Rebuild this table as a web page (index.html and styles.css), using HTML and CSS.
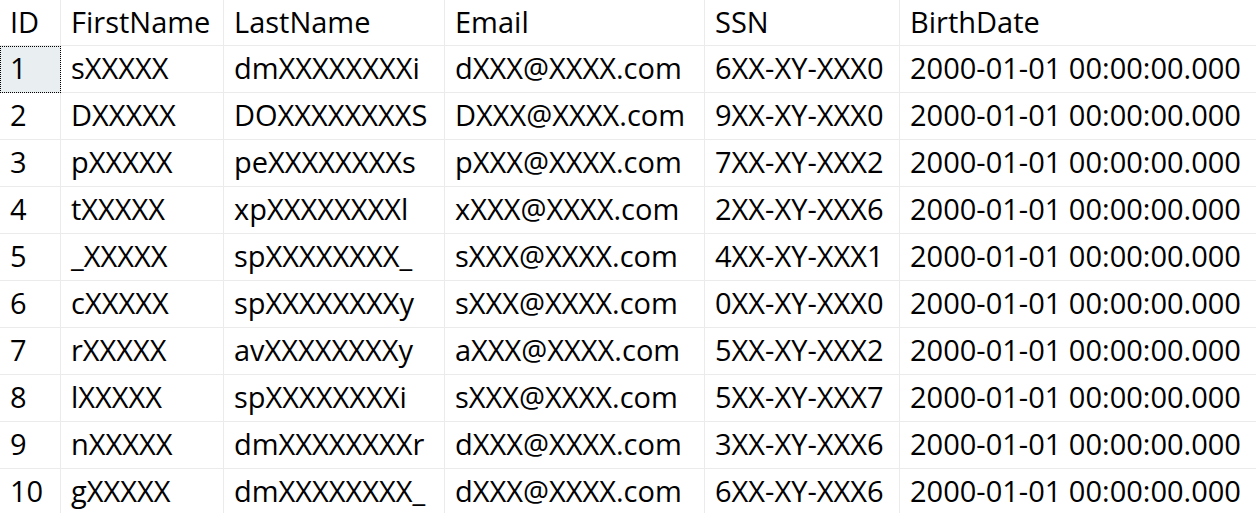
FILE: index.html
```html
<!DOCTYPE html>
<html lang="en">
<head>
<meta charset="utf-8" />
<title>Results</title>
<link rel="stylesheet" href="styles.css">
</head>
<body>
<table class="grid">
	<colgroup>
		<col class="c-id">
		<col class="c-first">
		<col class="c-last">
		<col class="c-email">
		<col class="c-ssn">
		<col class="c-birth">
	</colgroup>
	<thead>
		<tr><th>ID</th><th>FirstName</th><th>LastName</th><th>Email</th><th>SSN</th><th>BirthDate</th></tr>
	</thead>
	<tbody>
		<tr><td class="current">1</td><td>sXXXXX</td><td>dmXXXXXXXXi</td><td>dXXX@XXXX.com</td><td>6XX-XY-XXX0</td><td>2000-01-01 00:00:00.000</td></tr>
		<tr><td>2</td><td>DXXXXX</td><td>DOXXXXXXXXS</td><td>DXXX@XXXX.com</td><td>9XX-XY-XXX0</td><td>2000-01-01 00:00:00.000</td></tr>
		<tr><td>3</td><td>pXXXXX</td><td>peXXXXXXXXs</td><td>pXXX@XXXX.com</td><td>7XX-XY-XXX2</td><td>2000-01-01 00:00:00.000</td></tr>
		<tr><td>4</td><td>tXXXXX</td><td>xpXXXXXXXXl</td><td>xXXX@XXXX.com</td><td>2XX-XY-XXX6</td><td>2000-01-01 00:00:00.000</td></tr>
		<tr><td>5</td><td>_XXXXX</td><td>spXXXXXXXX_</td><td>sXXX@XXXX.com</td><td>4XX-XY-XXX1</td><td>2000-01-01 00:00:00.000</td></tr>
		<tr><td>6</td><td>cXXXXX</td><td>spXXXXXXXXy</td><td>sXXX@XXXX.com</td><td>0XX-XY-XXX0</td><td>2000-01-01 00:00:00.000</td></tr>
		<tr><td>7</td><td>rXXXXX</td><td>avXXXXXXXXy</td><td>aXXX@XXXX.com</td><td>5XX-XY-XXX2</td><td>2000-01-01 00:00:00.000</td></tr>
		<tr><td>8</td><td>lXXXXX</td><td>spXXXXXXXXi</td><td>sXXX@XXXX.com</td><td>5XX-XY-XXX7</td><td>2000-01-01 00:00:00.000</td></tr>
		<tr><td>9</td><td>nXXXXX</td><td>dmXXXXXXXXr</td><td>dXXX@XXXX.com</td><td>3XX-XY-XXX6</td><td>2000-01-01 00:00:00.000</td></tr>
		<tr><td>10</td><td>gXXXXX</td><td>dmXXXXXXXX_</td><td>dXXX@XXXX.com</td><td>6XX-XY-XXX6</td><td>2000-01-01 00:00:00.000</td></tr>
	</tbody>
</table>
</body>
</html>
```

FILE: styles.css
```css
html, body{margin:0; padding:0; background:#fff; overflow:hidden;}
.grid{table-layout:fixed; width:1300px; border-collapse:separate; border-spacing:0; font-family:"Open Sans", "Noto Sans", sans-serif; font-size:29px; color:#000;}
.c-id{width:61px;}
.c-first{width:163px;}
.c-last{width:221px;}
.c-email{width:260px;}
.c-ssn{width:195px;}
.c-birth{width:400px;}
.grid th, .grid td{text-align:left; font-weight:normal; white-space:nowrap; overflow:hidden; line-height:38px; padding:3px 0 5px 10px; border-right:1px solid #ebebeb; border-bottom:1px solid #ebebeb;}
.grid th{padding-top:3px; padding-bottom:4px;}
.grid td.current{background:#e9eef1; outline:1px dotted #000; outline-offset:-1px;}
```
